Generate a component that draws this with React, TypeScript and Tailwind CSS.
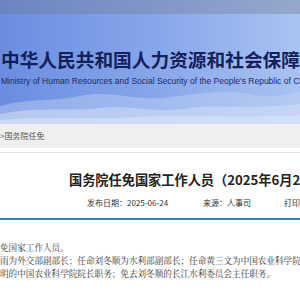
import React from "react";

const cjkSans = { fontFamily: '"Noto Sans CJK SC", "Liberation Sans", sans-serif' };
const cjkSerif = { fontFamily: '"Noto Serif CJK SC", "Liberation Serif", "Noto Sans CJK SC", serif' };

function Mountains() {
  return (
    <svg className="absolute left-0 bottom-0" width="300" height="40" viewBox="0 0 300 40" preserveAspectRatio="none">
      <path d="M0 22 C30 14 50 18 80 12 C110 6 130 16 160 14 C190 12 220 4 250 10 C270 14 285 12 300 8 L300 40 L0 40 Z" fill="#c3d3f3" opacity="0.45" />
      <path d="M0 30 C40 22 70 28 100 24 C130 20 150 30 190 24 C220 20 250 26 300 20 L300 40 L0 40 Z" fill="#d2def6" opacity="0.55" />
      <path d="M0 36 C50 32 90 36 140 33 C190 30 240 35 300 31 L300 40 L0 40 Z" fill="#dbe5f8" opacity="0.6" />
    </svg>
  );
}

export default function App() {
  return (
    <div className="w-[300px] h-[300px] overflow-hidden bg-white" style={cjkSans}>
      <div className="relative h-[124px] overflow-hidden bg-gradient-to-r from-[#6a8de0] via-[#86a5ea] to-[#aac3f2]">
        <div className="h-[14px] bg-gradient-to-r from-[#6d84c3] to-[#95a8cc]" />
        <Mountains />
        <div className="relative pt-[36px] pl-[1px] whitespace-nowrap">
          <div className="text-[18.7px] leading-[18px] font-bold text-[#14205a]" style={cjkSans}>
            中华人民共和国人力资源和社会保障部
          </div>
          <div
            className="mt-[9px] text-[8.5px] leading-[8px] text-[#1b2a66]"
            style={{ fontFamily: '"Liberation Sans", Arial, sans-serif' }}
          >
            Ministry of Human Resources and Social Security of the People's Republic of China
          </div>
        </div>
      </div>
      <div className="h-[24px] bg-[#efefef] flex items-center text-[8px] text-[#555] whitespace-nowrap">
        &gt;国务院任免
      </div>
      <div className="mt-[4px] h-px bg-[#e2e2e2]" />
      <div className="mt-[20px] pl-[69px] text-[13.2px] leading-[14px] font-bold text-[#222] whitespace-nowrap">
        国务院任免国家工作人员（2025年6月24日）
      </div>
      <div className="mt-[11px] flex text-[8px] leading-[10px] text-[#333] whitespace-nowrap">
        <span className="pl-[87px] w-[203px]">发布日期：2025-06-24</span>
        <span className="w-[81px]">来源：人事司</span>
        <span>打印</span>
      </div>
      <div className="mt-[10px] h-[2px] bg-[#3a7cc2]" />
      <div className="mt-[21px] text-[8.6px] leading-[13px] text-[#333] whitespace-nowrap" style={cjkSerif}>
        <div>免国家工作人员。</div>
        <div>雨为外交部副部长；任命刘冬顺为水利部副部长；任命黄三文为中国农业科学院院长。</div>
        <div>明的中国农业科学院院长职务；免去刘冬顺的长江水利委员会主任职务。</div>
      </div>
    </div>
  );
}
